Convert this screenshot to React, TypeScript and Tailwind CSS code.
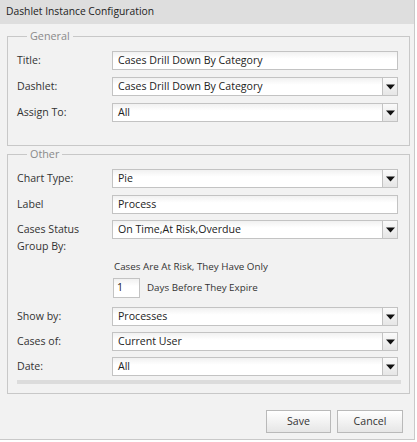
import React from "react";

const font = { fontFamily: '"Open Sans", "DejaVu Sans", sans-serif' };

function Caret() {
  return (
    <svg width="9" height="6" viewBox="0 0 9 6">
      <polygon points="0,0.5 9,0.5 4.5,5.5" fill="#111" />
    </svg>
  );
}

function TextBox({ value }: { value: string }) {
  return (
    <div className="flex h-[19px] w-[286px] items-center border border-[#c3c3c3] bg-gradient-to-b from-[#f1f1f1] to-white to-[40%] pl-[5px] text-[10.6px] text-[#222]">
      {value}
    </div>
  );
}

function Select({ value }: { value: string }) {
  return (
    <div className="flex h-[19px] w-[286px]">
      <div className="flex flex-1 items-center border border-[#c3c3c3] bg-gradient-to-b from-[#f1f1f1] to-white to-[40%] pl-[5px] text-[10.6px] text-[#222]">
        {value}
      </div>
      <div className="flex w-[15px] items-center justify-center border border-l-0 border-[#c3c3c3] bg-gradient-to-b from-[#fafafa] to-[#e6e6e6]">
        <Caret />
      </div>
    </div>
  );
}

function Row({ label, children, className = "" }: { label: React.ReactNode; children: React.ReactNode; className?: string }) {
  return (
    <div className={"flex " + className}>
      <div className="w-[95px] pt-[1px] text-[10.6px] leading-[17px] text-[#333]">{label}</div>
      {children}
    </div>
  );
}

export default function App() {
  return (
    <div className="h-[442px] w-[417px] bg-white" style={font}>
      <div className="flex h-[440px] w-[415px] flex-col border-b border-r border-[#c9c9c9] bg-[#f2f2f2]">
        <div className="flex h-[24px] items-center bg-[#dedede] pl-[6px] text-[10.3px] text-[#222]">
          Dashlet Instance Configuration
        </div>
        <fieldset className="ml-[7px] mt-[4px] w-[403px] border border-[#c8c8c8] pb-[23px] pl-[9px] pr-[11px]">
          <legend className="ml-[10px] px-[3px] text-[10.8px] leading-[16px] text-[#8a8a8a]">General</legend>
          <div className="mt-[7px] flex flex-col gap-[7px]">
            <Row label="Title:">
              <TextBox value="Cases Drill Down By Category" />
            </Row>
            <Row label="Dashlet:">
              <Select value="Cases Drill Down By Category" />
            </Row>
            <Row label="Assign To:">
              <Select value="All" />
            </Row>
          </div>
        </fieldset>
        <fieldset className="ml-[7px] mt-[0px] w-[403px] border border-[#c8c8c8] pb-[9px] pl-[9px] pr-[7px]">
          <legend className="ml-[10px] px-[3px] text-[10.8px] leading-[16px] text-[#8a8a8a]">Other</legend>
          <div className="mt-[7px] flex flex-col">
            <Row label="Chart Type:">
              <Select value="Pie" />
            </Row>
            <Row label="Label" className="mt-[7px]">
              <TextBox value="Process" />
            </Row>
            <Row label={<>Cases Status<br />Group By:</>} className="mt-[6px]">
              <Select value="On Time,At Risk,Overdue" />
            </Row>
            <div className="ml-[97px] mt-[5px] text-[9.8px] leading-[14px] text-[#333]">Cases Are At Risk, They Have Only</div>
            <div className="ml-[96px] mt-[4px] flex items-center">
              <div className="flex h-[20px] w-[27px] items-center border border-[#c3c3c3] bg-gradient-to-b from-[#f1f1f1] to-white to-[40%] pl-[3px] text-[10.6px] text-[#222]">
                1
              </div>
              <div className="ml-[7px] text-[9.8px] text-[#333]">Days Before They Expire</div>
            </div>
            <Row label="Show by:" className="mt-[9px]">
              <Select value="Processes" />
            </Row>
            <Row label="Cases of:" className="mt-[6px]">
              <Select value="Current User" />
            </Row>
            <Row label="Date:" className="mt-[6px]">
              <Select value="All" />
            </Row>
            <div className="mt-[4px] h-[4px] w-[384px] bg-[#dcdcdc]" />
          </div>
        </fieldset>
        <div className="mt-[16px] flex justify-end gap-[6px] pr-[11px]">
          <button className="h-[23px] w-[65px] border border-[#b9b9b9] bg-gradient-to-b from-white to-[#e6e6e6] text-[10.6px] text-[#333]">
            Save
          </button>
          <button className="h-[23px] w-[66px] border border-[#b9b9b9] bg-gradient-to-b from-white to-[#e6e6e6] text-[10.6px] text-[#333]">
            Cancel
          </button>
        </div>
      </div>
    </div>
  );
}
